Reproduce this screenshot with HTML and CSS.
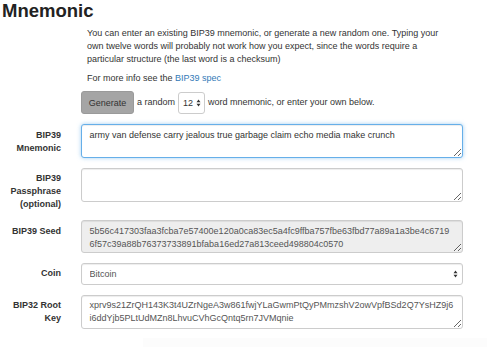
FILE: index.html
```html
<!DOCTYPE html>
<html>
<head>
<meta charset="utf-8">
<link rel="stylesheet" href="styles.css">
</head>
<body>
<h2 class="title">Mnemonic</h2>
<div class="intro">
  <p>You can enter an existing BIP39 mnemonic, or generate a new random one. Typing your own twelve words will probably not work how you expect, since the words require a particular structure (the last word is a checksum)</p>
  <p>For more info see the <a href="#">BIP39 spec</a></p>
</div>
<div class="gen-row">
  <button class="btn">Generate</button>
  <span>a random</span>
  <span class="sel small">
    <select><option>12</option></select>
    <svg class="arrows" width="5" height="8" viewBox="0 0 5 8"><path d="M2.5 0.5 L4.5 3.2 L0.5 3.2 Z M2.5 7.5 L4.5 4.8 L0.5 4.8 Z" fill="#333"/></svg>
  </span>
  <span>word mnemonic, or enter your own below.</span>
</div>
<form class="form">
  <div class="group">
    <label>BIP39 Mnemonic</label>
    <textarea class="ctl focus">army van defense carry jealous true garbage claim echo media make crunch</textarea>
  </div>
  <div class="group">
    <label>BIP39 Passphrase (optional)</label>
    <textarea class="ctl"></textarea>
  </div>
  <div class="group">
    <label>BIP39 Seed</label>
    <textarea class="ctl ro" readonly>5b56c417303faa3fcba7e57400e120a0ca83ec5a4fc9ffba757fbe63fbd77a89a1a3be4c6719
6f57c39a88b76373733891bfaba16ed27a813ceed498804c0570</textarea>
  </div>
  <div class="group">
    <label>Coin</label>
    <span class="sel wide">
      <select class="ctl sel-ctl"><option>Bitcoin</option></select>
      <svg class="arrows" width="5" height="8" viewBox="0 0 5 8"><path d="M2.5 0.5 L4.5 3.2 L0.5 3.2 Z M2.5 7.5 L4.5 4.8 L0.5 4.8 Z" fill="#333"/></svg>
    </span>
  </div>
  <div class="group">
    <label>BIP32 Root Key</label>
    <textarea class="ctl" readonly>xprv9s21ZrQH143K3t4UZrNgeA3w861fwjYLaGwmPtQyPMmzshV2owVpfBSd2Q7YsHZ9j6
i6ddYjb5PLtUdMZn8LhvuCVhGcQntq5rn7JVMqnie</textarea>
  </div>
</form>
<div class="next"></div>
</body>
</html>
```
FILE: styles.css
```css
html, body {
  margin: 0;
  padding: 0;
  background: #fff;
}
body {
  font-family: "Liberation Sans", Arial, sans-serif;
  font-size: 9px;
  line-height: 1.42857;
  color: #333;
  width: 487px;
  height: 347px;
  overflow: hidden;
}
.title {
  margin: 0;
  padding: 1px 0 0 2px;
  font-size: 18.5px;
  font-weight: bold;
  line-height: 20px;
  color: #222;
}
.intro {
  padding-left: 87px;
  width: 354px;
  margin-top: 6px;
}
.intro p {
  margin: 0 0 6.4px 0;
}
.intro a {
  color: #337ab7;
  text-decoration: none;
}
.gen-row {
  display: flex;
  align-items: center;
  gap: 3px;
  padding-left: 81px;
  margin-top: 0;
}
.btn {
  font-family: inherit;
  font-size: 9px;
  color: #333;
  background: #a5a5a5;
  border: 1px solid #9a9a9a;
  border-radius: 3px;
  width: 53px;
  height: 23px;
  padding: 0;
}
.sel {
  position: relative;
  display: inline-block;
}
.sel select {
  appearance: none;
  -webkit-appearance: none;
  font-family: inherit;
  font-size: 9px;
  color: #555;
  background: #fff;
  border: 1px solid #ccc;
  border-radius: 3px;
  outline: none;
}
.sel.small select {
  width: 27px;
  height: 22px;
  padding: 0 0 0 4px;
  color: #333;
}
.sel .arrows {
  position: absolute;
  top: 50%;
  margin-top: -4px;
  right: 5px;
  pointer-events: none;
}
.sel.small .arrows {
  right: 4px;
}
.form {
  margin-top: 10px;
}
.group {
  display: flex;
  align-items: flex-start;
  margin-bottom: 9.6px;
}
.group label {
  width: 61px;
  flex: none;
  text-align: right;
  font-weight: bold;
  padding-top: 4.5px;
  margin-right: 20px;
  color: #333;
}
.ctl {
  box-sizing: border-box;
  width: 382px;
  height: 34px;
  font-family: inherit;
  font-size: 9px;
  line-height: 12.86px;
  color: #555;
  background: #fff;
  border: 1px solid #ccc;
  border-radius: 3px;
  padding: 3.5px 7.5px;
  margin: 0;
  outline: none;
  box-shadow: inset 0 1px 1px rgba(0,0,0,.075);
  display: block;
}
.ctl.focus {
  border-color: #66afe9;
  box-shadow: inset 0 1px 1px rgba(0,0,0,.075), 0 0 4px rgba(102,175,233,.6);
  color: #333;
}
.ctl.ro {
  background: #eee;
  height: 33px;
}
.sel.wide .sel-ctl {
  width: 382px;
  height: 22px;
  padding: 0 7.5px;
  color: #555;
}
.next {
  margin: 8px 0 0 143px;
  height: 20px;
  background: #fcfcfc;
}
```
